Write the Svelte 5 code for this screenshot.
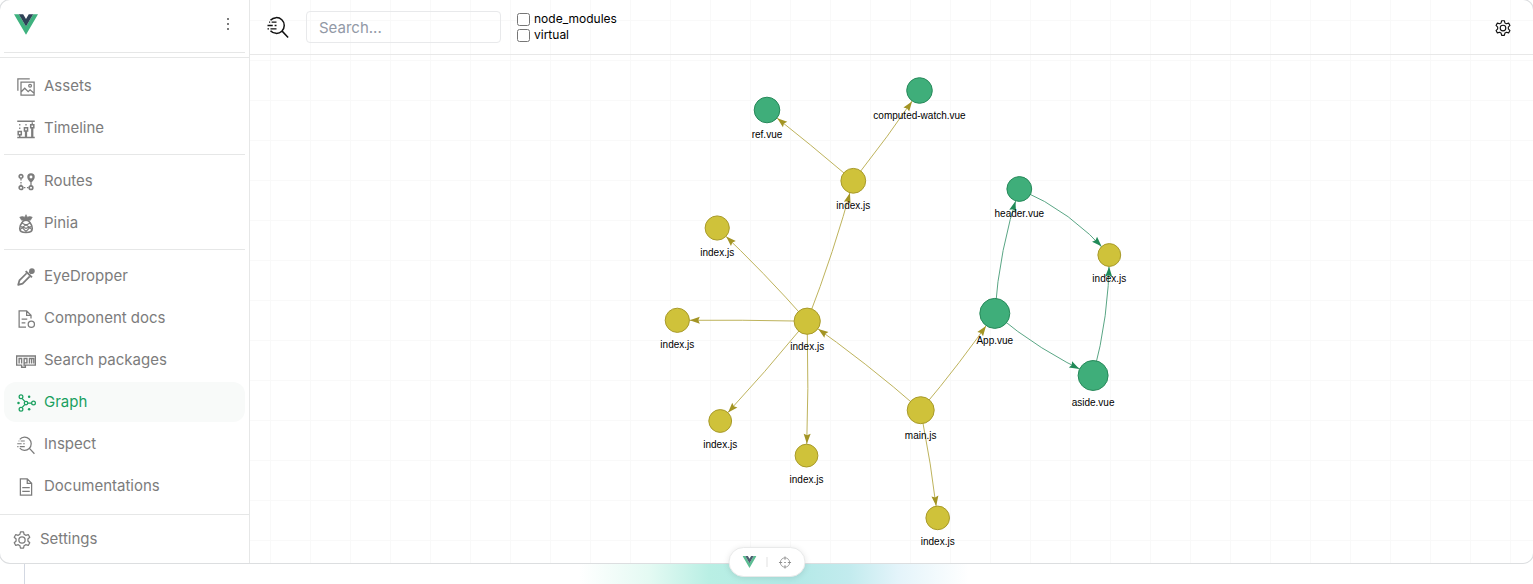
<script>
  const groups = [
    [
      { label: 'Assets', icon: 'assets' },
      { label: 'Timeline', icon: 'timeline' },
    ],
    [
      { label: 'Routes', icon: 'routes' },
      { label: 'Pinia', icon: 'pinia' },
    ],
    [
      { label: 'EyeDropper', icon: 'dropper' },
      { label: 'Component docs', icon: 'docs' },
      { label: 'Search packages', icon: 'npm' },
      { label: 'Graph', icon: 'graph', active: true },
      { label: 'Inspect', icon: 'inspect' },
      { label: 'Documentations', icon: 'document' },
    ],
  ];

  const nodes = {
    ref: { x: 517, y: 110, r: 13, kind: 'vue', label: 'ref.vue' },
    watch: { x: 669.5, y: 90.5, r: 13, kind: 'vue', label: 'computed-watch.vue' },
    pages: { x: 603.3, y: 180.8, r: 12.6, kind: 'js', label: 'index.js' },
    a: { x: 467.2, y: 228, r: 12.3, kind: 'js', label: 'index.js' },
    b: { x: 427.3, y: 320.3, r: 12.3, kind: 'js', label: 'index.js' },
    router: { x: 557.2, y: 321.2, r: 13.3, kind: 'js', label: 'index.js' },
    c: { x: 470.2, y: 421, r: 11.6, kind: 'js', label: 'index.js' },
    d: { x: 556.5, y: 455.6, r: 11.6, kind: 'js', label: 'index.js' },
    main: { x: 670.7, y: 410.2, r: 13.7, kind: 'js', label: 'main.js' },
    e: { x: 687.7, y: 517.9, r: 12, kind: 'js', label: 'index.js' },
    app: { x: 744.8, y: 313.4, r: 15.2, kind: 'vue', label: 'App.vue' },
    aside: { x: 843.1, y: 375.5, r: 15.2, kind: 'vue', label: 'aside.vue' },
    header: { x: 769.3, y: 189, r: 12.6, kind: 'vue', label: 'header.vue' },
    store: { x: 859.3, y: 255, r: 11.6, kind: 'js', label: 'index.js' },
  };

  // [from, to, bend of the curve to the right of the direction of travel]
  const links = [
    ['pages', 'ref', 1],
    ['pages', 'watch', 2],
    ['router', 'pages', 4],
    ['router', 'a', 3],
    ['router', 'b', 1],
    ['router', 'c', -2],
    ['router', 'd', -2],
    ['main', 'router', 4],
    ['main', 'app', 3],
    ['main', 'e', -2],
    ['app', 'header', -8],
    ['app', 'aside', 8],
    ['aside', 'store', 8],
    ['header', 'store', -13],
  ];

  function shape([from, to, bend]) {
    const s = nodes[from];
    const t = nodes[to];
    const dx = t.x - s.x;
    const dy = t.y - s.y;
    const len = Math.hypot(dx, dy);
    const cx = (s.x + t.x) / 2 - (dy / len) * bend;
    const cy = (s.y + t.y) / 2 + (dx / len) * bend;
    const at = (k) => [
      (1 - k) ** 2 * s.x + 2 * k * (1 - k) * cx + k * k * t.x,
      (1 - k) ** 2 * s.y + 2 * k * (1 - k) * cy + k * k * t.y,
    ];
    const cut = (dist) => {
      let k = 1;
      while (k > 0) {
        const p = at(k);
        if (Math.hypot(p[0] - t.x, p[1] - t.y) >= dist) return p;
        k -= 0.002;
      }
      return at(0);
    };
    const tip = cut(t.r);
    const tail = cut(t.r + 10);
    const angle = (Math.atan2(tip[1] - tail[1], tip[0] - tail[0]) * 180) / Math.PI;
    return { line: `M${s.x} ${s.y}Q${cx} ${cy} ${t.x} ${t.y}`, tip, angle, kind: s.kind };
  }

  const edges = links.map(shape);
  const points = Object.values(nodes);

  let search = $state('');
  let nodeModules = $state(false);
  let virtual = $state(false);
</script>

{#snippet vueLogo(cls)}
  <svg class={cls} viewBox="0 0 256 221" aria-hidden="true">
    <path fill="#3fb27f" d="M0 0l128 220.8L256 0h-51.2L128 132.5 50.6 0z" />
    <path fill="#2f4358" d="M50.6 0L128 133.1 204.8 0h-47.4L128 51.2 97.9 0z" />
  </svg>
{/snippet}

{#snippet icon(name, cls)}
  <svg class={cls} viewBox="0 0 32 32" fill="none" stroke="currentColor" stroke-width="2" aria-hidden="true">
    {#if name === 'assets'}
      <path d="M3 22V3h19M8 8h21v21H8zM8 24l6-6 5.500 5.500 3-3L29 26" />
      <circle cx="22.500" cy="14" r="2.200" />
    {:else if name === 'timeline'}
      <path d="M2 3.500h28M2 29.500h28" stroke-width="2.600" />
      <path d="M3.500 20h5v5h-5zM13.500 14h5v5h-5zM23.500 9h5v5h-5zM6 25v4M15.400 19v10M16.600 19v10M25.400 14v15M26.600 14v15" stroke-width="2.400" />
      <path d="M6 8v2.500M6 13.500v2.500M16 8v2.500M26 5v3" />
    {:else if name === 'routes'}
      <circle cx="8" cy="7" r="2.900" stroke-width="2.600" />
      <circle cx="8" cy="25" r="2.900" stroke-width="2.600" />
      <circle cx="24" cy="25" r="2.900" stroke-width="2.600" />
      <path d="M8 11v2.500M8 16v2.500M8 20v2M12.500 25h2.500M17.500 25h2.500M24 17v5" />
      <path fill="currentColor" fill-rule="evenodd" stroke="none" d="M24 2a6 6 0 0 1 6 6c0 3-3 6.500-6 10-3-3.500-6-7-6-10a6 6 0 0 1 6-6zm0 3.700a2.300 2.300 0 1 0 0 4.600 2.300 2.300 0 0 0 0-4.600z" />
    {:else if name === 'pinia'}
      <path d="M16 10c-3 0-5 1-6.500 4C7 17 6 20 6 23c0 4 4 6.500 10 6.500S26 27 26 23c0-3-1-6-3.500-9C21 11 19 10 16 10z" stroke-width="2.600" />
      <path fill="currentColor" d="M16 1l2 4 4-1 4 1-3 5H9L6 5l4-1 4 1z" stroke-width="1" />
      <path d="M9 14l7 4 7-4M7 19l9 9 9-9M6.500 25l9.500-8 9.500 8M8 20l8 3 8-3" stroke-width="1.800" />
    {:else if name === 'dropper'}
      <circle cx="25.500" cy="6.500" r="4.500" fill="currentColor" stroke="none" />
      <path d="M15.500 6.500l10 10" stroke-width="3" />
      <path d="M22 10l3-3" stroke-width="5" />
      <path d="M17 10L5.500 21.500 3.500 28.500l7-2L22 15" stroke-width="2.800" stroke-linejoin="round" />
    {:else if name === 'docs'}
      <path d="M16 29H5V3h12l7 7v5M17 3v7h7M9 16h9M9 22h6" />
      <circle cx="24.500" cy="24.500" r="5" />
    {:else if name === 'npm'}
      <path d="M1 8h30v14.500H15V26H9v-3.500H1z" stroke-width="2.200" />
      <path d="M5 20v-8h4v8M13 24V12h4.500v7H13M21.500 20v-8h7v8M25 12v8" stroke-width="2.200" />
    {:else if name === 'graph'}
      <path d="M10 9l4 4.500M10 23l4-4.500M19 16h6" />
      <circle cx="8" cy="6" r="3" />
      <circle cx="8" cy="26" r="3" />
      <circle cx="16" cy="16" r="2.800" />
      <circle cx="28" cy="16" r="3" />
      <g fill="currentColor" stroke="none">
        <circle cx="21" cy="6" r="2" />
        <circle cx="4" cy="16" r="2" />
        <circle cx="21" cy="26" r="2" />
      </g>
    {:else if name === 'inspect'}
      <path d="M6 7A10.500 10.500 0 1 1 6 21M21.500 21.500L29.500 30" />
      <path d="M4 9.500h1.500M7.500 9.500H14M2 14h7M11.500 14H14M2 18.500h2M6 18.500h8" stroke-width="1.800" />
    {:else if name === 'document'}
      <path d="M7 3h11l7 7v19H7zM18 3v7h7M10 17h12M10 23h12" />
    {:else if name === 'settings'}
      <path
        stroke-linejoin="round"
        d="M13.600 3h4.800l1 4a9.500 9.500 0 0 1 2.600 1.500l4-1.200 2.400 4.200-3 2.900a9 9 0 0 1 0 3.200l3 2.900-2.400 4.200-4-1.200a9.500 9.500 0 0 1-2.600 1.500l-1 4h-4.800l-1-4a9.500 9.500 0 0 1-2.600-1.500l-4 1.200-2.400-4.200 3-2.900a9 9 0 0 1 0-3.200l-3-2.900L6 7.300l4 1.200A9.500 9.500 0 0 1 12.600 7z"
      />
      <circle cx="16" cy="16" r="5" />
    {:else if name === 'target'}
      <circle cx="16" cy="16" r="11.500" />
      <path d="M16 1v8M16 23v8M1 16h8M23 16h8M14 16h4" stroke-width="2.500" />
    {/if}
  </svg>
{/snippet}

<div class="page">
  <div class="panel">
    <aside class="sidebar">
      <header class="brand">
        <div class="brand-row">
          {@render vueLogo('logo')}
          <button class="more" aria-label="More">
            <svg viewBox="0 0 16 16" fill="currentColor" aria-hidden="true">
              <rect x="7" y="2" width="2" height="2" /><rect x="7" y="7" width="2" height="2" /><rect x="7" y="12" width="2" height="2" />
            </svg>
          </button>
        </div>
      </header>
      <nav>
        {#each groups as group}
          <div class="group">
            {#each group as item}
              <a class="item" class:active={item.active} href="#{item.icon}">
                {@render icon(item.icon, 'icon')}<span>{item.label}</span>
              </a>
            {/each}
          </div>
        {/each}
      </nav>
      <a class="item settings" href="#settings">{@render icon('settings', 'icon')}<span>Settings</span></a>
    </aside>

    <main>
      <svg class="canvas" viewBox="0 0 1283 563" role="img" aria-label="Module graph">
        {#each edges as edge}
          <g class={edge.kind}>
            <path class="line" d={edge.line} />
            <path class="arrow" d="M0 0L-10 3.500L-8.500 0L-10-3.500Z" transform="translate({edge.tip[0]} {edge.tip[1]}) rotate({edge.angle})" />
          </g>
        {/each}
        {#each points as p}
          <g class={p.kind}>
            <circle class="node" cx={p.x} cy={p.y} r={p.r - 0.2} />
            <text x={p.x} y={p.y + p.r + 15.4}>{p.label}</text>
          </g>
        {/each}
      </svg>

      <div class="toolbar">
        {@render icon('inspect', 'find')}
        <input class="search" type="text" placeholder="Search..." aria-label="Search" bind:value={search} />
        <div class="filters">
          <label><input type="checkbox" bind:checked={nodeModules} /><span>node_modules</span></label>
          <label><input type="checkbox" bind:checked={virtual} /><span>virtual</span></label>
        </div>
        <button class="gear" aria-label="Graph settings">{@render icon('settings', 'gear-icon')}</button>
      </div>
    </main>
  </div>

  <div class="under"></div>

  <div class="pill">
    <button aria-label="Toggle devtools">{@render vueLogo('mini')}</button>
    <span class="bar"></span>
    <button aria-label="Inspect component">{@render icon('target', 'target')}</button>
  </div>
</div>

<style>
  .page {
    position: relative;
    display: flex;
    flex-direction: column;
    min-height: 100vh;
    background: #fff;
    font-family: Inter, sans-serif;
    overflow: hidden;
  }
  .panel {
    position: relative;
    z-index: 1;
    flex: 1;
    display: flex;
    background: #fff;
    border-radius: 10px;
    box-shadow: 0 0 0 1px #dcdee0;
  }
  button {
    display: flex;
    align-items: center;
    justify-content: center;
    padding: 0;
    border: 0;
    background: none;
    color: inherit;
  }

  .sidebar {
    box-sizing: border-box;
    flex: 0 0 250px;
    display: flex;
    flex-direction: column;
    border-right: 1px solid #e6e7e7;
    color: #7c7c7c;
  }
  .brand {
    padding: 0 4px 4px;
    border-bottom: 1px solid #e6e7e7;
  }
  .brand-row {
    display: flex;
    align-items: center;
    justify-content: space-between;
    height: 48px;
    padding: 0 9px 4px 10px;
    border-bottom: 1px solid #e6e7e7;
  }
  .logo {
    width: 24px;
    height: 21px;
  }
  .more svg {
    width: 16px;
    height: 16px;
  }
  nav {
    flex: 1;
    padding: 8px 4px 0;
  }
  .group {
    display: flex;
    flex-direction: column;
    gap: 2px;
  }
  .group + .group {
    margin-top: 6px;
    padding-top: 6px;
    border-top: 1px solid #e6e7e7;
  }
  .item {
    display: flex;
    align-items: center;
    gap: 8px;
    height: 40px;
    padding: 0 12px;
    border-radius: 12px;
    color: #7c7c7c;
    font-size: 15px;
    line-height: 24px;
    text-decoration: none;
  }
  .item.active {
    background: #f8faf9;
    color: #19a05f;
  }
  .icon {
    width: 20px;
    height: 20px;
    margin-top: 2px;
  }
  .settings {
    height: 48px;
    border-top: 1px solid #e6e7e7;
    border-radius: 0;
  }

  main {
    position: relative;
    flex: 1;
    min-width: 0;
    background-image: linear-gradient(#f9f9f9 1px, transparent 1px), linear-gradient(90deg, #f9f9f9 1px, transparent 1px);
    background-size: 40px 40px;
    background-position: 20px 20px;
    border-radius: 0 10px 10px 0;
  }
  .canvas {
    position: absolute;
    inset: 0;
    width: 100%;
    height: 100%;
  }
  .line {
    fill: none;
    stroke-width: 1;
  }
  .js .line {
    stroke: #beb35c;
  }
  .vue .line {
    stroke: #5aa685;
  }
  .js .arrow {
    fill: #a39424;
  }
  .vue .arrow {
    fill: #218a58;
  }
  .js .node {
    fill: #cfc23a;
    stroke: #a89a2a;
  }
  .vue .node {
    fill: #3fae7a;
    stroke: #27895a;
  }
  text {
    font-family: 'Liberation Sans', Arial, sans-serif;
    font-size: 10px;
    text-anchor: middle;
    fill: #000;
  }

  .toolbar {
    position: relative;
    display: flex;
    align-items: center;
    height: 54px;
    padding: 0 21px 0 16px;
    border-bottom: 1px solid #e8e8e8;
  }
  .find {
    width: 24px;
    height: 24px;
    color: #111;
  }
  .search {
    box-sizing: border-box;
    width: 195px;
    height: 32px;
    margin: 0 16px;
    padding: 0 12px;
    border: 1px solid #e8e9eb;
    border-radius: 4px;
    background: transparent;
    font: 15px Inter, sans-serif;
    outline: 0;
  }
  .search::placeholder {
    color: #9299a6;
  }
  .filters {
    display: flex;
    flex-direction: column;
  }
  label {
    display: flex;
    align-items: center;
    gap: 4px;
    font-size: 12px;
    line-height: 16px;
    color: #000;
  }
  label input {
    width: 13px;
    height: 13px;
    margin: 0;
  }
  .gear {
    margin-left: auto;
    padding-top: 2px;
    color: #111;
  }
  .gear-icon {
    width: 18px;
    height: 18px;
  }

  .under {
    height: 21px;
    margin-left: 24px;
    border-left: 1px solid #d3d8e2;
    background: linear-gradient(
        90deg,
        transparent calc(50% - 200px),
        #e4faf3 calc(50% - 130px),
        #b9efe4 calc(50% - 70px),
        #b2e9e6 calc(50% + 10px),
        #c2ebee calc(50% + 70px),
        #e4f4fa calc(50% + 120px),
        transparent calc(50% + 190px)
      );
  }
  .pill {
    position: absolute;
    z-index: 2;
    bottom: 7px;
    left: 50%;
    box-sizing: border-box;
    display: flex;
    align-items: center;
    justify-content: space-between;
    width: 77px;
    height: 30px;
    padding: 0 13px;
    transform: translateX(-50%);
    border: 1px solid #e9eaea;
    border-radius: 15px;
    background: #fff;
    box-shadow: 0 1px 6px rgba(0, 0, 0, 0.1);
    color: #8f8f8f;
  }
  .mini {
    width: 14px;
    height: 12px;
    opacity: 0.85;
  }
  .bar {
    width: 1px;
    height: 10px;
    background: #e2e2e2;
  }
  .target {
    width: 13px;
    height: 13px;
  }
</style>
